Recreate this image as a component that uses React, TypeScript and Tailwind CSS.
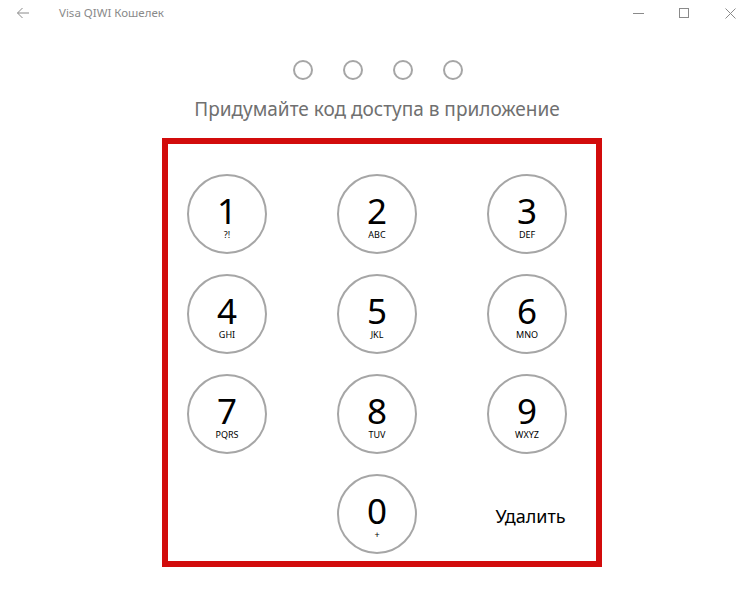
import React from "react";

const keys: { d: string; s: string }[] = [
  { d: "1", s: "?!" },
  { d: "2", s: "ABC" },
  { d: "3", s: "DEF" },
  { d: "4", s: "GHI" },
  { d: "5", s: "JKL" },
  { d: "6", s: "MNO" },
  { d: "7", s: "PQRS" },
  { d: "8", s: "TUV" },
  { d: "9", s: "WXYZ" },
];

function Key({ d, s }: { d: string; s: string }) {
  return (
    <div className="w-[80px] h-[80px] rounded-full border-2 border-[#a6a6a6] flex flex-col items-center justify-start pt-[20px]">
      <div className="text-[35px] leading-[30px] text-black">{d}</div>
      <div className="text-[9px] leading-[10px] text-black mt-[4px]">{s}</div>
    </div>
  );
}

export default function App() {
  return (
    <div
      className="w-[753px] h-[592px] bg-white relative overflow-hidden"
      style={{ fontFamily: '"Noto Sans", "Open Sans", sans-serif' }}
    >
      <div className="h-[26px] flex items-center">
        <div className="w-[46px] flex justify-center">
          <svg width="14" height="12" viewBox="0 0 14 12" fill="none" stroke="#8a8a8a" strokeWidth="1">
            <path d="M13 6H1.5M6.5 1L1.5 6l5 5" />
          </svg>
        </div>
        <div className="ml-[13px] text-[11.5px] text-[#8a8a8a]">Visa QIWI Кошелек</div>
        <div className="ml-auto flex items-center h-full">
          <div className="w-[46px] flex justify-center">
            <div className="w-[11px] h-px bg-[#8a8a8a]" />
          </div>
          <div className="w-[46px] flex justify-center">
            <div className="w-[10px] h-[10px] border border-[#8a8a8a]" />
          </div>
          <div className="w-[46px] flex justify-center">
            <svg width="11" height="11" viewBox="0 0 11 11" stroke="#8a8a8a" strokeWidth="1">
              <path d="M0.5 0.5l10 10M10.5 0.5l-10 10" />
            </svg>
          </div>
        </div>
      </div>
      <div className="flex justify-center gap-[30px] mt-[34px] ml-[2px]">
        {[0, 1, 2, 3].map((i) => (
          <div key={i} className="w-[20px] h-[20px] rounded-full border-2 border-[#a6a6a6]" />
        ))}
      </div>
      <div className="text-center text-[19px] leading-[28px] text-[#707070] mt-[15px] ml-[1px]">
        Придумайте код доступа в приложение
      </div>
      <div className="ml-[162px] mt-[15px] w-[440px] h-[429px] border-[6px] border-[#d20c0c] pl-[19px] pt-[30px]">
        <div className="grid grid-cols-[80px_80px_80px] gap-x-[70px] gap-y-[20px]">
          {keys.map((k) => (
            <Key key={k.d} d={k.d} s={k.s} />
          ))}
          <div />
          <Key d="0" s="+" />
          <div className="flex items-center justify-center text-[18px] text-black w-[80px] pt-[5px] pl-[7px]">
            <span className="whitespace-nowrap">Удалить</span>
          </div>
        </div>
      </div>
    </div>
  );
}
